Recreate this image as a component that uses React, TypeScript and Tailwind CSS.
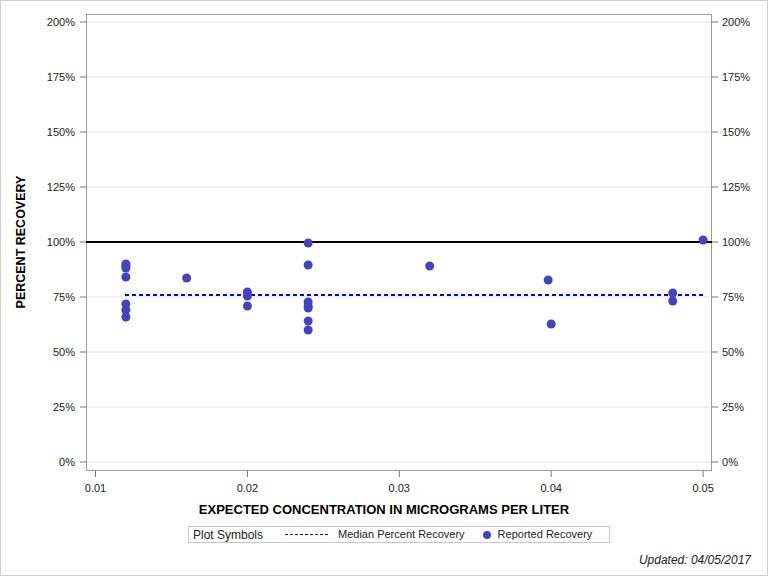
import React from 'react';

const ticksY = [0, 25, 50, 75, 100, 125, 150, 175, 200];
const ticksX = [0.01, 0.02, 0.03, 0.04, 0.05];
const yPx = (p: number) => 461 - p * 2.2;
const xPx = (v: number) => 94.5 + (v - 0.01) * 15190;

// [x value, pixel y]
const points: [number, number][] = [
  [0.012, 263], [0.012, 265], [0.012, 267], [0.012, 276], [0.012, 303], [0.012, 309], [0.012, 316],
  [0.016, 277],
  [0.02, 291], [0.02, 295], [0.02, 305],
  [0.024, 242], [0.024, 264], [0.024, 301], [0.024, 305], [0.024, 307], [0.024, 320], [0.024, 329],
  [0.032, 265],
  [0.0398, 279], [0.04, 323],
  [0.048, 292], [0.048, 300],
  [0.05, 239],
];

export default function App() {
  return (
    <div className="w-[768px] h-[576px] bg-white border border-[#d0d0d0] flex flex-col font-[Liberation_Sans,Arial,sans-serif] text-[#222]">
      <svg width="766" height="496" viewBox="0 0 766 496" className="block font-[Liberation_Sans,Arial,sans-serif]">
        <text transform="translate(24 241) rotate(-90)" textAnchor="middle" fontSize="12.5" fontWeight="bold" fill="#000">PERCENT RECOVERY</text>
        {ticksY.map((t) => (
          <g key={t}>
            <line x1="85" x2="711" y1={yPx(t)} y2={yPx(t)} stroke="#e4e4e4" />
            <line x1="79" x2="85" y1={yPx(t)} y2={yPx(t)} stroke="#777" />
            <line x1="711" x2="717" y1={yPx(t)} y2={yPx(t)} stroke="#777" />
            <text x="74" y={yPx(t) + 4} textAnchor="end" fontSize="11" fill="#222">{t}%</text>
            <text x="721" y={yPx(t) + 4} fontSize="11" fill="#222">{t}%</text>
          </g>
        ))}
        {ticksX.map((t) => (
          <g key={t}>
            <line x1={xPx(t)} x2={xPx(t)} y1="470" y2="476" stroke="#777" />
            <text x={xPx(t)} y="491" textAnchor="middle" fontSize="11" fill="#222">{t.toFixed(2)}</text>
          </g>
        ))}
        <rect x="85.5" y="13.5" width="625" height="456" fill="none" stroke="#999" />
        <line x1="85" x2="711" y1="241" y2="241" stroke="#000" strokeWidth="2" />
        <line x1="124" x2="705" y1="294" y2="294" stroke="#0000ff" strokeWidth="2" strokeDasharray="4 3" />
        {points.map(([v, y], i) => (
          <circle key={i} cx={xPx(v)} cy={y} r="4.5" fill="#4343c2" />
        ))}
      </svg>
      <div className="text-center text-[13px] font-bold text-black mt-[5px] leading-4">EXPECTED CONCENTRATION IN MICROGRAMS PER LITER</div>
      <div className="flex justify-start pl-[187px] mt-[8px]">
        <div className="flex items-center h-[17px] border border-[#c8c8c8] px-[4px] text-[11px] w-[422px]">
          <span className="text-[12px] mr-[22px]">Plot Symbols</span>
          <span className="w-[43px] border-t-[1.5px] border-dashed border-[#0000ff] mr-[10px]"></span>
          <span className="mr-[18px]">Median Percent Recovery</span>
          <span className="w-[8px] h-[8px] rounded-full bg-[#4343c2] mr-[7px]"></span>
          <span>Reported Recovery</span>
        </div>
      </div>
      <div className="text-right italic text-[12px] pr-[16px] mt-[8px]">Updated: 04/05/2017</div>
    </div>
  );
}
